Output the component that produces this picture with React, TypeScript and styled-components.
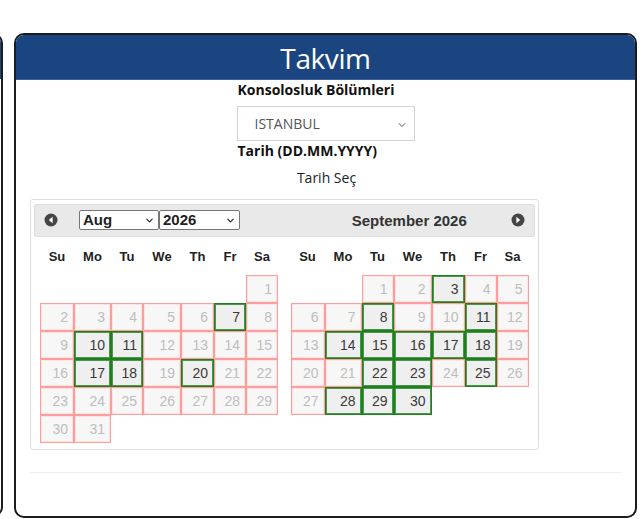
import React from "react";
import styled, { createGlobalStyle } from "styled-components";
import { ChevronDown } from "lucide-react";

const GlobalStyle = createGlobalStyle`
  body {
    margin: 0;
    background: #ffffff;
    overflow: hidden;
    font-family: "Open Sans", "Noto Sans", sans-serif;
  }
`;

const COLS = [34, 37, 32, 38, 33, 32, 32];
const DAY_NAMES = ["Su", "Mo", "Tu", "We", "Th", "Fr", "Sa"];

type Month = {
  title: string;
  offset: number;
  days: number;
  open: number[];
};

const AUGUST: Month = { title: "Aug", offset: 6, days: 31, open: [7, 10, 11, 17, 18, 20] };
const SEPTEMBER: Month = {
  title: "September 2026",
  offset: 2,
  days: 30,
  open: [3, 8, 11, 14, 15, 16, 17, 18, 22, 23, 25, 28, 29, 30],
};

const Page = styled.div`
  display: flex;
  gap: 11px;
  padding-top: 33px;
  height: 486px;
`;

const SidePanel = styled.div`
  flex: 0 0 300px;
  margin-left: -297px;
  border: 2px solid #1c1c1c;
  border-radius: 10px;
  overflow: hidden;
  box-sizing: border-box;
  height: 484px;
`;

const SideHeader = styled.div`
  height: 44px;
  background: #1b4580;
`;

const Card = styled.div`
  flex: 0 0 623px;
  box-sizing: border-box;
  height: 485px;
  border: 2px solid #1c1c1c;
  border-radius: 10px;
  overflow: hidden;
  display: flex;
  flex-direction: column;
`;

const CardHeader = styled.div`
  height: 44px;
  background: #1b4580;
  border-bottom: 1px solid #3b64a0;
  color: #ffffff;
  font-size: 28px;
  line-height: 46px;
  text-align: center;
  letter-spacing: -0.4px;
`;

const Body = styled.div`
  padding: 0 14px;
  display: flex;
  flex-direction: column;
`;

const FormColumn = styled.div`
  width: 178px;
  margin: 0 auto;
  display: flex;
  flex-direction: column;
`;

const Label = styled.div`
  font-weight: 700;
  font-size: 14px;
  line-height: 20px;
  color: #111;
  padding-left: 1px;
`;

const SelectBox = styled.div`
  position: relative;
  margin-top: 6px;
  height: 35px;
  box-sizing: border-box;
  border: 1px solid #d3d3d3;
  display: flex;
  align-items: center;
  padding-left: 17px;
  font-size: 14px;
  color: #555;
  svg {
    position: absolute;
    right: 6px;
    top: 12px;
  }
`;

const PickText = styled.div`
  margin-top: 7px;
  text-align: center;
  font-size: 14px;
  line-height: 20px;
  color: #222;
  padding-left: 2px;
`;

const Calendar = styled.div`
  margin-top: 11px;
  align-self: flex-start;
  width: 509px;
  box-sizing: border-box;
  border: 1px solid #dddddd;
  border-radius: 3px;
  padding: 4px 3px 6px 3px;
  display: flex;
  font-family: "Liberation Sans", Arial, sans-serif;
`;

const MonthGroup = styled.div`
  flex: 1 1 0;
`;

const MonthHeader = styled.div<{ $side: "left" | "right" }>`
  position: relative;
  height: 33px;
  box-sizing: border-box;
  background: #e9e9e9;
  border: 1px solid #dddddd;
  border-${(p) => (p.$side === "left" ? "right" : "left")}-width: 0;
  border-radius: ${(p) => (p.$side === "left" ? "3px 0 0 3px" : "0 3px 3px 0")};
  display: flex;
  align-items: center;
  justify-content: ${(p) => (p.$side === "left" ? "flex-start" : "center")};
  font-weight: 700;
  font-size: 15px;
  color: #333;
`;

const NavIcon = styled.svg<{ $side: "left" | "right" }>`
  position: absolute;
  top: 8px;
  ${(p) => (p.$side === "left" ? "left: 9px;" : "right: 9px;")}
`;

const PickerSelect = styled.div<{ $w: number }>`
  position: relative;
  width: ${(p) => p.$w}px;
  height: 20px;
  box-sizing: border-box;
  border: 1px solid #767676;
  border-radius: 2px;
  background: #fff;
  font-weight: 700;
  font-size: 15px;
  line-height: 18px;
  padding-left: 3px;
  color: #222;
  svg {
    position: absolute;
    right: 3px;
    top: 4px;
  }
`;

const SelectRow = styled.div`
  display: flex;
  margin-left: 44px;
  margin-top: -2px;
`;

const Grid = styled.div`
  display: grid;
  grid-template-columns: ${COLS.map((c) => `${c}px`).join(" ")};
  grid-template-rows: 38px;
  grid-auto-rows: 28px;
  margin: 0 0 0 6px;
`;

const DayName = styled.div`
  display: flex;
  align-items: center;
  justify-content: center;
  font-weight: 700;
  font-size: 13px;
  color: #222;
`;

const Day = styled.div<{ $open: boolean }>`
  box-sizing: border-box;
  border: 1px solid ${(p) => (p.$open ? "#1d7f1d" : "#ff9d9d")};
  box-shadow: inset 0 0 0 1px ${(p) => (p.$open ? "rgba(20,120,20,0.75)" : "#ffe4e4")};
  background: ${(p) => (p.$open ? "#efefef" : "#f7f7f7")};
  color: ${(p) => (p.$open ? "#3a3a3a" : "#bdbdbd")};
  font-size: 14px;
  display: flex;
  align-items: center;
  justify-content: flex-end;
  padding-right: 5px;
`;

const Separator = styled.div`
  margin-top: 22px;
  height: 1px;
  background: #eeeeee;
`;

const Arrow = ({ side }: { side: "left" | "right" }) => (
  <NavIcon $side={side} width="14" height="14" viewBox="0 0 14 14">
    <circle cx="7" cy="7" r="6.5" fill="#454545" />
    {side === "left" ? (
      <path d="M8.6 3.8 L4.8 7 L8.6 10.2 Z" fill="#ffffff" />
    ) : (
      <path d="M5.4 3.8 L9.2 7 L5.4 10.2 Z" fill="#ffffff" />
    )}
  </NavIcon>
);

const MonthGrid = ({ month }: { month: Month }) => (
  <Grid>
    {DAY_NAMES.map((d) => (
      <DayName key={d}>{d}</DayName>
    ))}
    {Array.from({ length: month.offset }).map((_, i) => (
      <div key={`e${i}`} />
    ))}
    {Array.from({ length: month.days }).map((_, i) => {
      const n = i + 1;
      return (
        <Day key={n} $open={month.open.includes(n)}>
          {n}
        </Day>
      );
    })}
  </Grid>
);

export default function App() {
  return (
    <>
      <GlobalStyle />
      <Page>
        <SidePanel>
          <SideHeader />
        </SidePanel>
        <Card>
          <CardHeader>Takvim</CardHeader>
          <Body>
            <FormColumn>
              <Label>Konsolosluk Bölümleri</Label>
              <SelectBox>
                ISTANBUL
                <ChevronDown size={12} color="#555" strokeWidth={2} />
              </SelectBox>
              <Label>Tarih (DD.MM.YYYY)</Label>
            </FormColumn>
            <PickText>Tarih Seç</PickText>
            <Calendar>
              <MonthGroup>
                <MonthHeader $side="left">
                  <Arrow side="left" />
                  <SelectRow>
                    <PickerSelect $w={80}>
                      {AUGUST.title}
                      <ChevronDown size={11} color="#222" strokeWidth={2.5} />
                    </PickerSelect>
                    <PickerSelect $w={81}>
                      2026
                      <ChevronDown size={11} color="#222" strokeWidth={2.5} />
                    </PickerSelect>
                  </SelectRow>
                </MonthHeader>
                <MonthGrid month={AUGUST} />
              </MonthGroup>
              <MonthGroup>
                <MonthHeader $side="right">
                  {SEPTEMBER.title}
                  <Arrow side="right" />
                </MonthHeader>
                <MonthGrid month={SEPTEMBER} />
              </MonthGroup>
            </Calendar>
            <Separator />
          </Body>
        </Card>
      </Page>
    </>
  );
}
